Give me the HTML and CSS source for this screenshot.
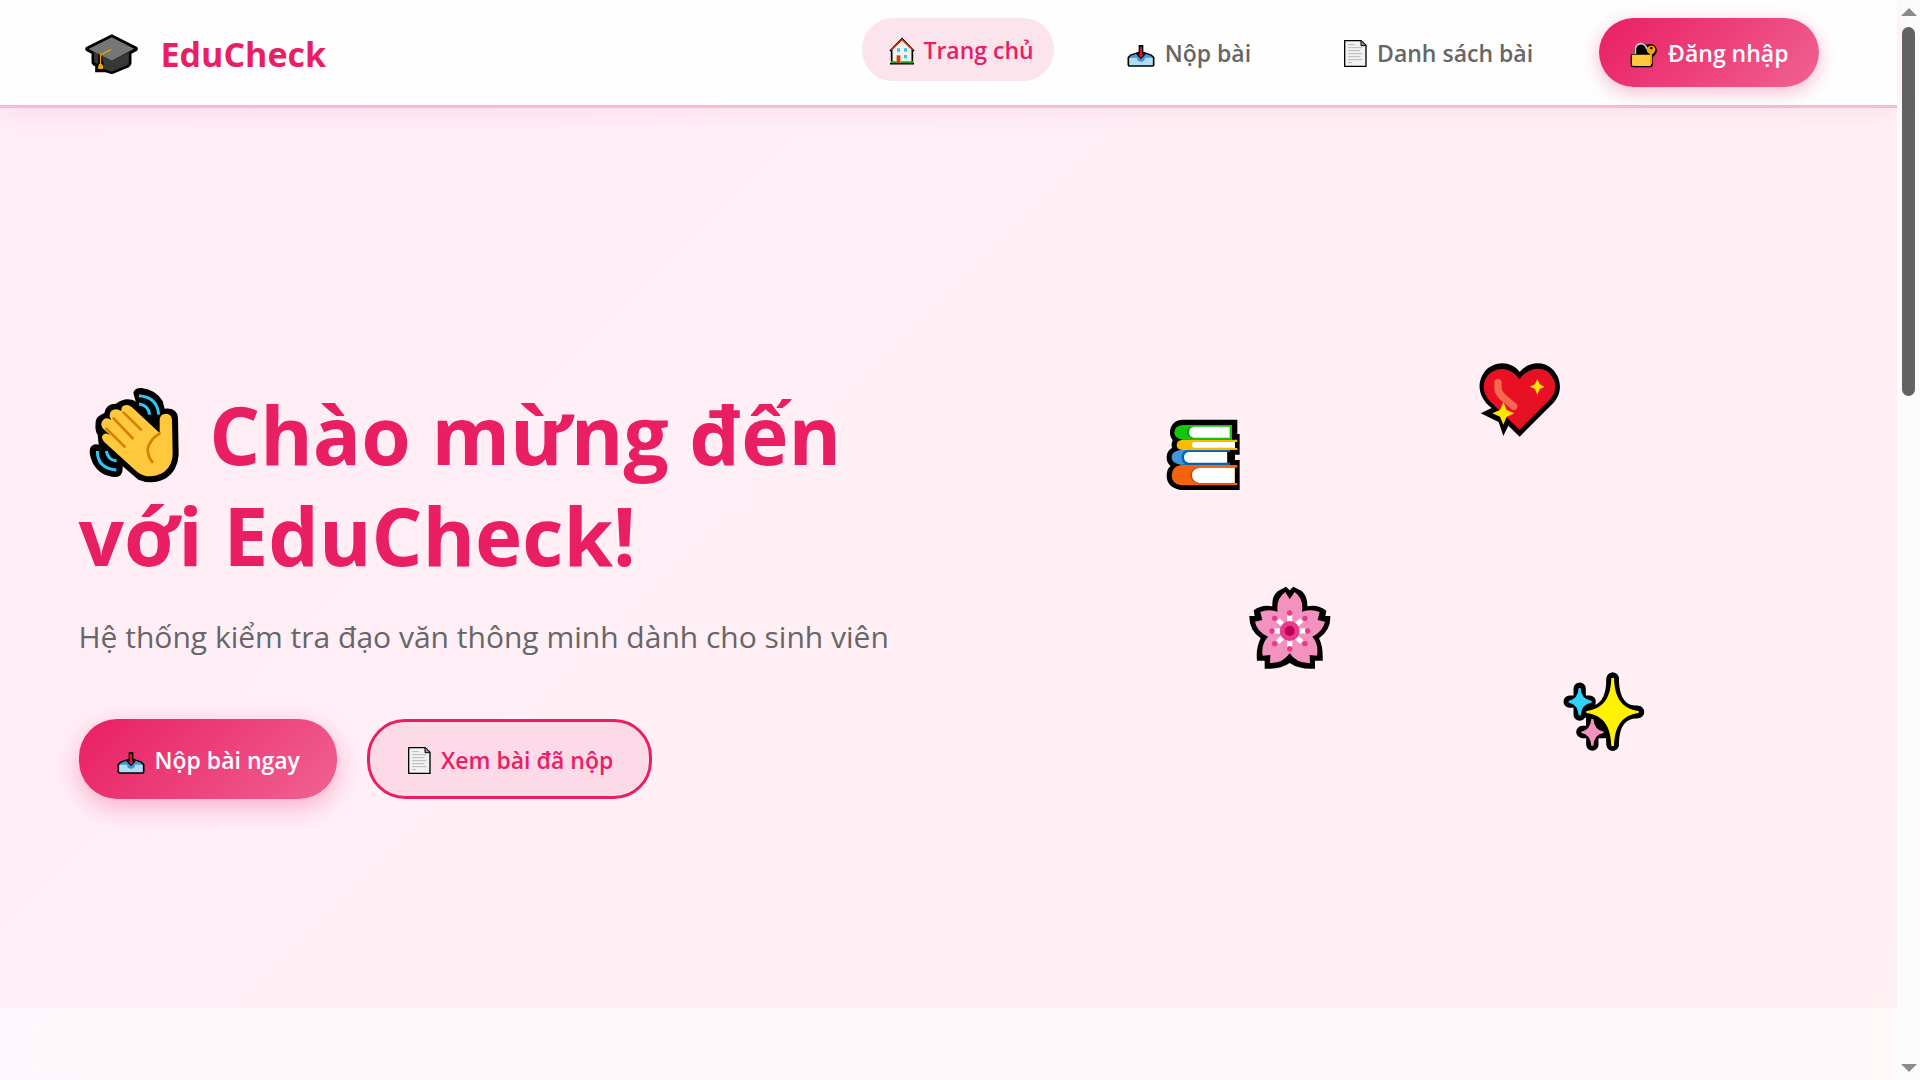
FILE: index.html
```html
<!DOCTYPE html>
<html lang="vi">
<head>
<meta charset="utf-8">
<meta name="viewport" content="width=device-width, initial-scale=1">
<title>EduCheck</title>
<link rel="stylesheet" href="styles.css">
</head>
<body>
<svg class="sprite" aria-hidden="true">
  <symbol id="tray" viewBox="0 0 84 66">
    <path d="M4 38l7-7 22-8h18l22 8 7 7v21q0 4-5 4H9q-5 0-5-4z" fill="#b3ddf3" stroke="#000" stroke-width="5" stroke-linejoin="round"/>
    <path d="M7 38l6-5 20-8h18l20 8 6 5H54a12 12 0 0 1-24 0z" fill="#4197de"/>
    <path d="M37 2h10v25h7L42 40 30 27h7z" fill="#000" stroke="#000" stroke-width="4"/>
    <path d="M39 5h6v23h6l-9 10-9-10h6z" fill="#e81123"/>
  </symbol>
  <symbol id="doc" viewBox="0 0 69 81">
    <path d="M2 2h49l15 14v63H2z" fill="#f2f2f2" stroke="#000" stroke-width="4"/>
    <path d="M51 3v14h14" fill="#999" stroke="#000" stroke-width="3"/>
    <path d="M12 14h22M12 23h43M12 32h37M12 41h43M12 50h37M12 59h43M12 68h12" stroke="#b8b8b8" stroke-width="3"/>
  </symbol>
</svg>
<div class="page">
  <header class="header">
    <div class="container bar">
      <a class="logo" href="#">
        <svg width="55" height="42" viewBox="72 72 164 126" aria-hidden="true">
          <path d="M155 76L231 114Q236 119 231 125L214 134V162Q214 170 206 175L163 193Q154 197 146 193L136 190H105V172Q95 169 94 160V134L78 126Q72 120 78 114Z" fill="#000"/>
          <path d="M102 128L155 156 206 130V161Q206 166 200 169L158 187Q154 189 150 187L130 179V164L124 139 114 134V164Q102 164 102 156Z" fill="#383838"/>
          <path d="M155 85L222 119 155 155 85 120Z" fill="#767676"/>
          <path d="M153 121L121 138V169" fill="none" stroke="#e8a200" stroke-width="4"/>
          <path d="M117 165h8l4 6v9h-15v-9z" fill="#f2a600"/>
        </svg>
        <span>EduCheck</span>
      </a>
      <nav class="nav">
        <a class="link active" href="#">
          <svg width="26" height="28" viewBox="120 110 78 84" aria-hidden="true">
            <path d="M130 148L159 119 188 148V187H130Z" fill="#f2f2f2"/>
            <path d="M123 152L159 115 195 152M128 148V184M190 148V184M123 190H195" fill="none" stroke="#000" stroke-width="5"/>
            <path d="M127 149L159 118 191 149" fill="none" stroke="#d83b01" stroke-width="4"/>
            <path d="M144 144h9v10h-9zM165 144h9v10h-9zM165 164h9v10h-9z" fill="#31c7f4"/>
            <path d="M126 183h17v6h-17zM155 183h38v6h-38z" fill="#16a810"/>
            <path d="M143 165h11v24h-11z" fill="#d83b01"/>
          </svg>
          <span>Trang chủ</span>
        </a>
        <a class="link" href="#"><svg width="28" height="22" class="low" aria-hidden="true"><use href="#tray"/></svg><span>Nộp bài</span></a>
        <a class="link" href="#"><svg width="23" height="27" aria-hidden="true"><use href="#doc"/></svg><span>Danh sách bài</span></a>
        <button class="login" type="button">
          <svg width="28" height="28" viewBox="0 0 84 84" aria-hidden="true">
            <path d="M3 43H12V28A25 25 0 0 1 51 14Q68 8 78 22Q84 36 75 45L68 51V75Q68 82 60 82H9Q2 82 2 75V48Z" fill="#000"/>
            <path d="M16 42V29A17 17 0 0 1 50 27" fill="none" stroke="#d5d5d5" stroke-width="5"/>
            <path d="M6 44H63V74Q63 78 58 78H11Q6 78 6 74Z" fill="#ffc83d"/>
            <path d="M60 17C71 14 79 24 75 34L70 41 66 42V72L60 70V42C47 37 46 22 60 17Z" fill="#f2a600"/>
            <circle cx="64" cy="24" r="4" fill="#000"/>
          </svg>
          <span>Đăng nhập</span>
        </button>
      </nav>
    </div>
  </header>
  <main class="main">
    <section class="hero">
      <div class="container columns">
        <div class="intro">
          <h1><svg class="wave" width="90" height="96" viewBox="87 72 270 288" aria-hidden="true">
              <path d="M220 90Q224 74 244 75Q284 78 308 114L314 137Q353 134 354 166L356 275Q353 322 318 346Q278 368 235 350L188 310Q190 342 166 342Q120 340 98 300Q82 262 94 250Q102 241 116 245L113 215Q104 205 107 180Q104 162 133 150Q138 122 168 122Q190 104 216 110Q229 113 229 122Z" fill="#000"/>
              <path d="M188 130Q202 120 216 133L299 210V170Q300 152 318 152Q335 153 336 170L338 272Q337 315 301 333Q263 350 231 326L132 236Q120 222 131 214Q139 208 151 217L128 196Q119 181 130 170Q140 161 154 171L149 161Q148 145 160 140Q172 136 184 144Q182 136 188 130Z" fill="#ffc83d"/>
              <path d="M191 149L243 200M161 166L218 226M139 197L194 251M299 211Q270 229 263 257Q264 283 277 297" fill="none" stroke="#d67f00" stroke-width="8" stroke-linecap="round"/>
              <path d="M237 98Q292 102 296 155M237 123Q265 126 269 155M112 264Q112 316 169 321M139 264Q144 292 170 294" fill="none" stroke="#31c7f4" stroke-width="9"/>
            </svg> Chào mừng đến với EduCheck!</h1>
          <p>Hệ thống kiểm tra đạo văn thông minh dành cho sinh viên</p>
          <div class="actions">
            <button class="btn primary" type="button"><svg width="28" height="22" class="low" aria-hidden="true"><use href="#tray"/></svg><span>Nộp bài ngay</span></button>
            <button class="btn outline" type="button"><svg width="23" height="27" aria-hidden="true"><use href="#doc"/></svg><span>Xem bài đã nộp</span></button>
          </div>
        </div>
        <div class="floating" aria-hidden="true">
          <svg class="books" width="74" height="72" viewBox="51 57 222 216">
            <path d="M98 59H265V102H272V164H258V180H272V270H95Q52 262 53 225Q54 205 65 198Q52 188 53 170Q54 152 69 144Q65 132 71 121Q58 104 65 84Q74 60 98 59Z" fill="#000"/>
            <path d="M102 75H249V119H102Q76 116 76 97T102 75Z" fill="#16c60c"/>
            <path d="M130 80H242V114H130Q114 112 114 97T130 80Z" fill="#0d9a10"/>
            <path d="M134 80H242V113H134Q120 111 120 97T134 80Z" fill="#fff"/>
            <path d="M100 119H265V126H258V144H265V150H100Q83 148 83 135T100 119Z" fill="#ffb900"/>
            <path d="M136 126H258V143H136Q128 142 128 135T136 126Z" fill="#fff"/>
            <path d="M93 150H242V194H93Q68 190 68 172T93 150Z" fill="#3f96dd"/>
            <path d="M112 151H242V194H112Q98 190 98 172T112 151Z" fill="#0063b1"/>
            <path d="M119 156H235V188H119Q105 186 105 172T119 156Z" fill="#fff"/>
            <path d="M235 156H258V188H235Z" fill="#000"/>
            <path d="M96 195H265V203H258V249H265V256H96Q68 252 68 226T96 195Z" fill="#f7630c"/>
            <path d="M148 201H258V251H148Q124 246 124 226T148 201Z" fill="#ca4a05"/>
            <path d="M151 203H257V249H151Q129 245 129 226T151 203Z" fill="#fff"/>
          </svg>
          <svg class="heart" width="81" height="74" viewBox="63 47 243 222">
            <path d="M185 74C207 45 253 38 282 64C314 95 312 139 286 167L185 268 151 235 136 266 122 224 68 198 101 182C65 157 52 110 79 74C107 40 158 39 185 74Z" fill="#000"/>
            <path d="M185 96C204 65 246 53 273 76C299 103 297 132 276 156L185 247 97 163C72 138 71 105 91 82C119 54 162 61 185 96Z" fill="#e81123"/>
            <path d="M120 106V125Q121 136 133 148L167 177" fill="none" stroke="#f4694f" stroke-width="22" stroke-linecap="round" stroke-linejoin="round"/>
            <path d="M136 164L146 188 169 198 146 208 136 232 126 208 103 198 126 188ZM238 94L245 111 260 118 245 125 238 142 231 125 216 118 231 111Z" fill="#ffe600"/>
          </svg>
          <svg class="flower" width="82" height="83" viewBox="44 30 246 249">
            <path d="M155 32L166 43 177 32 203 46Q220 62 219 91Q250 84 276 104L273 120H288Q290 161 254 187Q267 212 265 254H242V278Q195 281 166 261Q137 281 91 278V254H68Q64 216 79 187Q44 163 45 120H61L58 103Q83 84 114 91Q112 61 130 46Z" fill="#000"/>
            <path d="M153 48L166 70 181 48Q209 69 203 107Q232 98 256 108L250 132 272 137Q266 166 234 182Q254 205 248 239L226 237 227 261Q187 263 166 232Q145 263 107 261L108 237 85 239Q79 206 101 182Q67 166 62 137L84 132 78 108Q101 98 130 107Q124 69 153 48Z" fill="#f492bf"/>
            <path d="M166 118V213M119 165H214M130 132L202 198M202 132L130 198" stroke="#fff" stroke-width="15"/>
            <g fill="#e83a8d"><circle cx="166" cy="111" r="8"/><circle cx="166" cy="218" r="8"/><circle cx="113" cy="165" r="8"/><circle cx="220" cy="165" r="8"/><circle cx="121" cy="127" r="8"/><circle cx="212" cy="127" r="8"/><circle cx="121" cy="203" r="8"/><circle cx="212" cy="203" r="8"/><circle cx="166" cy="165" r="30"/></g>
            <circle cx="166" cy="165" r="15" fill="#bf0054"/>
          </svg>
          <svg class="sparkles" width="82" height="80" viewBox="40 30 246 240">
            <path d="M90 80V158M60 119H120M128 175V248M98 210H166M189 50V248M115 150H265M128 150L170 205" stroke="#000" stroke-width="37" stroke-linecap="round" fill="none"/>
            <path d="M189 50Q190 150 265 150Q190 150 189 248Q188 150 115 150Q188 150 189 50Z" fill="#000" stroke="#000" stroke-width="37" stroke-linejoin="round"/>
            <path d="M109 160h50v42h-50z"/>
            <path d="M87 78h6Q94 111 126 117V122Q96 126 93 160H87Q84 126 57 122V117Q85 111 87 78Z" fill="#31d2f7"/>
            <path d="M125 171h6Q134 204 162 209V213Q134 217 131 251H125Q122 217 95 213V209Q122 204 125 171Z" fill="#f492bf"/>
            <path d="M185 48H193C195 108 216 140 267 147V153C216 160 195 193 193 252H185C183 193 162 160 110 153V147C162 140 183 108 185 48Z" fill="#fff100"/>
          </svg>
        </div>
      </div>
    </section>
    <section class="next"></section>
  </main>
</div>
<div class="scrollbar" aria-hidden="true">
  <svg width="16" height="8" viewBox="0 0 16 8"><path d="M8 0l8 8H0z" fill="#8b8b8b"/></svg>
  <div class="track"><div class="thumb"></div></div>
  <svg width="16" height="8" viewBox="0 0 16 8"><path d="M8 8l8-8H0z" fill="#8b8b8b"/></svg>
</div>
</body>
</html>
```
FILE: styles.css
```css
* { box-sizing: border-box; }

body {
  margin: 0;
  display: flex;
  min-height: 100vh;
  font-family: "Segoe UI", "Open Sans", "Noto Sans", sans-serif;
  font-size: 23px;
  color: #666;
  background: #fcfcfc;
}

svg { flex: none; }
.sprite { position: absolute; width: 0; height: 0; }

.page { flex: 1; min-width: 0; display: flex; flex-direction: column; }
.container { width: 100%; max-width: 1800px; margin: 0 auto; padding: 0 30px; }

.header {
  position: relative;
  z-index: 1;
  background: #fefefe;
  border-bottom: 3px solid #f8bbd9;
  box-shadow: 0 4px 25px rgba(233, 30, 99, 0.08);
}
.bar { display: flex; align-items: center; justify-content: space-between; padding-top: 18px; padding-bottom: 18px; }

.logo {
  display: flex;
  align-items: center;
  gap: 22px;
  padding: 2px 0 0 5px;
  color: #e91e63;
  font-size: 34px;
  line-height: 48px;
  font-weight: 700;
  text-decoration: none;
}

.nav { display: flex; align-items: center; gap: 46px; }
.link, .login, .btn {
  display: flex;
  align-items: center;
  gap: 10px;
  font-family: inherit;
  font-size: 23px;
  line-height: 31px;
  font-weight: 600;
  text-decoration: none;
}
.link { color: #666; padding: 17px 20px 15px 27px; border-radius: 31px; }
.link.active { gap: 8px; color: #e91e63; background: #fce4ec; transform: translateY(-3px); }
.low { margin-top: 4px; }

.login, .btn { border: 0; color: #fff; background: linear-gradient(135deg, #e91e63, #f06292); }
.login { padding: 20px 30px 18px 31px; border-radius: 35px; box-shadow: 0 5px 18px rgba(233, 30, 99, 0.3); }

.main { flex: 1; display: flex; flex-direction: column; }
.hero {
  flex: 1;
  display: flex;
  align-items: center;
  padding: 66px 0 0;
  background: linear-gradient(135deg, #ffecf7 0%, #ffeff6 40%, #fff0f4 100%);
}
.next { flex: none; height: 72px; background: linear-gradient(90deg, #fff7fb, #fff9fa); }

.columns { display: grid; grid-template-columns: 1fr 1fr; gap: 76px; align-items: center; }
h1 { margin: 0 0 24px; color: #e91e63; font-size: 80px; line-height: 101px; font-weight: 700; }
.wave { margin: -8px 10px; vertical-align: -10px; }
p { margin: 0 0 54px; font-size: 30px; line-height: 56px; }
.actions { display: flex; gap: 30px; }
.btn { padding: 26px 37px 23px 38px; border-radius: 38px; }
.primary { box-shadow: 0 8px 25px rgba(233, 30, 99, 0.3); }
.outline { color: #e91e63; background: #fcdae7; border: 3px solid #e91e63; padding: 23px 36px 20px 38px; }

.floating { position: relative; height: 456px; }
.floating svg { position: absolute; }
.books { left: 179px; top: 56px; }
.heart { left: 492px; top: 0; }
.flower { left: 262px; top: 223px; }
.sparkles { left: 576px; top: 309px; }

.scrollbar {
  position: sticky;
  top: 0;
  flex: none;
  width: 23px;
  height: 100vh;
  padding: 8px 0;
  display: flex;
  flex-direction: column;
  align-items: center;
  gap: 11px;
  background: #fcfcfc;
}
.track { flex: 1; width: 13px; }
.thumb { height: 36%; border-radius: 7px; background: #636363; }
```
